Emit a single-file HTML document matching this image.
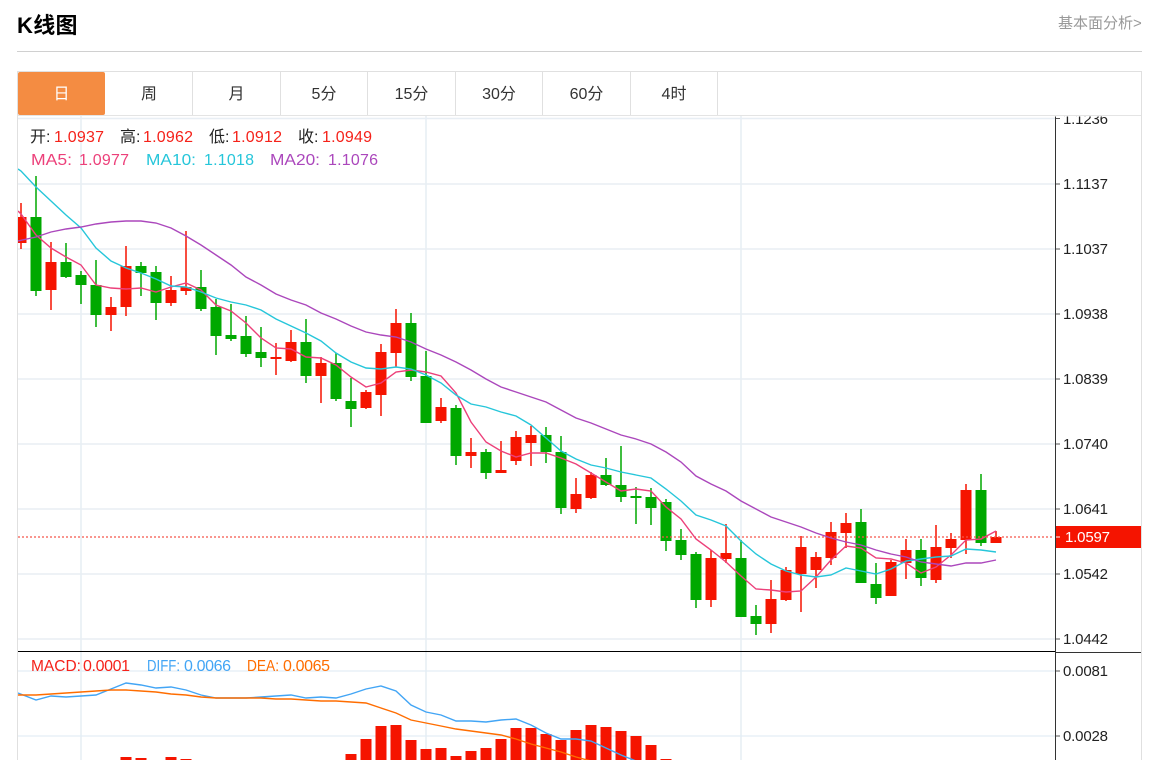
<!DOCTYPE html>
<html lang="zh">
<head>
<meta charset="utf-8">
<title>K线图</title>
<style>
html,body{margin:0;padding:0;background:#fff;width:1162px;height:760px;overflow:hidden}
body{position:relative;font-family:"Liberation Sans","Noto Sans CJK SC",sans-serif;color:#222}
.title{position:absolute;left:17px;top:10px;font-size:22px;line-height:32px;font-weight:bold;color:#000;letter-spacing:.3px}
.more{position:absolute;left:1058px;top:14px;font-size:15px;line-height:20px;color:#999;white-space:nowrap}
.hr{position:absolute;left:17px;top:51px;width:1125px;height:1px;background:#d0d0d0}
.box{position:absolute;left:17px;top:71px;width:1123px;height:700px;border:1px solid #e0e0e0}
.tab{position:absolute;top:72px;height:43px;line-height:45px;text-align:center;font-size:16px;color:#333;border-right:1px solid #e0e0e0;box-sizing:border-box}
.on{background:#f48c42;color:#fff;border-radius:2px;border-right:0}
.rule{position:absolute;left:18px;top:115px;width:1123px;height:1px;background:#e4e4e4}
svg{position:absolute;left:0;top:0}
svg text{font-family:"Liberation Sans","Noto Sans CJK SC",sans-serif}
</style>
</head>
<body>
<div class="title">K线图</div>
<div class="more">基本面分析&gt;</div>
<div class="hr"></div>
<div class="box"></div>
<div class="tab on" style="left:18px;width:87px">日</div>
<div class="tab" style="left:106px;width:87px">周</div>
<div class="tab" style="left:193px;width:88px">月</div>
<div class="tab" style="left:281px;width:87px">5分</div>
<div class="tab" style="left:368px;width:88px">15分</div>
<div class="tab" style="left:456px;width:87px">30分</div>
<div class="tab" style="left:543px;width:88px">60分</div>
<div class="tab" style="left:631px;width:87px">4时</div>
<div class="rule"></div>
<svg width="1162" height="760" viewBox="0 0 1162 760">
<defs>
<clipPath id="c"><rect x="18" y="116" width="1037" height="644"/></clipPath>
<clipPath id="t"><rect x="1056" y="116.5" width="85" height="20"/></clipPath>
</defs>
<g stroke="#e8eef4" stroke-width="1.6" fill="none">
<path d="M18 118.5H1055M18 184H1055M18 249H1055M18 314H1055M18 379H1055M18 444H1055M18 509H1055M18 574H1055M18 639H1055"/>
<path d="M81 116V651M426 116V651M741 116V651M81 652V760M426 652V760M741 652V760"/>
</g>
<path d="M18 671H1055M18 736H1055" stroke="#e3edf5" stroke-width="1.2" fill="none"/>
<g clip-path="url(#c)">
<path fill="none" stroke="#f51400" stroke-width="1.5" d="M21 203V249M51 242V310M111 297V331M126 246V316M171 276V306M186 231V295M276 343V375M291 330V362M321 357V403M366 390V409M381 344V416M396 309V367M441 398V423M471 438V468M501 441V473M516 431V465M531 426V466M576 478V513M591 472V499M711 550V607M726 524V563M771 580V633M786 567V601M801 536V612M816 552V588M831 522V565M846 513V548M891 560V596M906 539V579M936 525V583M951 533V558M966 484V554M996 531V543"/>
<path fill="#f51400" d="M15.5 217h11v26h-11zM45.5 262h11v28h-11zM105.5 307h11v8h-11zM120.5 266h11v41h-11zM165.5 290h11v13h-11zM180.5 287h11v4h-11zM270.5 357h11v2h-11zM285.5 342h11v19h-11zM315.5 363h11v13h-11zM360.5 392h11v16h-11zM375.5 352h11v43h-11zM390.5 323h11v30h-11zM435.5 407h11v14h-11zM465.5 452h11v4h-11zM495.5 470h11v3h-11zM510.5 437h11v24h-11zM525.5 435h11v8h-11zM570.5 494h11v15h-11zM585.5 475h11v23h-11zM705.5 558h11v42h-11zM720.5 553h11v6h-11zM765.5 599h11v25h-11zM780.5 570h11v30h-11zM795.5 547h11v27h-11zM810.5 557h11v13h-11zM825.5 532h11v26h-11zM840.5 523h11v10h-11zM885.5 562h11v34h-11zM900.5 550h11v13h-11zM930.5 547h11v33h-11zM945.5 539h11v9h-11zM960.5 490h11v50h-11zM990.5 537h11v6h-11z"/>
<path fill="none" stroke="#00a800" stroke-width="1.5" d="M36 176V296M66 243V278M81 271V304M96 260V327M141 262V296M156 266V320M201 270V311M216 299V355M231 304V341M246 316V357M261 327V367M306 319V383M336 353V401M351 378V427M411 313V381M426 351V423M456 405V465M486 449V479M546 427V463M561 436V514M606 458V486M621 446V502M636 487V524M651 488V525M666 499V551M681 529V560M696 552V608M741 540V617M756 605V635M861 509V583M876 563V604M921 539V586M981 474V546"/>
<path fill="#00a800" d="M30.5 217h11v74h-11zM60.5 262h11v15h-11zM75.5 275h11v10h-11zM90.5 285h11v30h-11zM135.5 266h11v7h-11zM150.5 272h11v31h-11zM195.5 287h11v22h-11zM210.5 307h11v29h-11zM225.5 335h11v4h-11zM240.5 336h11v18h-11zM255.5 352h11v6h-11zM300.5 342h11v34h-11zM330.5 363h11v36h-11zM345.5 401h11v8h-11zM405.5 323h11v54h-11zM420.5 376h11v47h-11zM450.5 408h11v48h-11zM480.5 452h11v21h-11zM540.5 435h11v17h-11zM555.5 452h11v56h-11zM600.5 475h11v10h-11zM615.5 485h11v12h-11zM630.5 496h11v2h-11zM645.5 497h11v11h-11zM660.5 502h11v39h-11zM675.5 540h11v15h-11zM690.5 554h11v46h-11zM735.5 558h11v59h-11zM750.5 616h11v8h-11zM855.5 522h11v61h-11zM870.5 584h11v14h-11zM915.5 550h11v28h-11zM975.5 490h11v53h-11z"/>
<path fill="none" stroke="#f5564a" stroke-width="1.2" stroke-dasharray="2 2" d="M18 537H1052"/>
<path fill="none" stroke="#ec407a" stroke-width="1.4" d="M18 211L21 214L36 235L51 248L66 257L81 265L96 285L111 288L126 289L141 288L156 292L171 287L186 283L201 290L216 305L231 311L246 323L261 338L276 348L291 349L306 357L321 358L336 365L351 377L366 387L381 383L396 372L411 370L426 372L441 376L456 393L471 422L486 442L501 451L516 457L531 453L546 453L561 458L576 464L591 473L606 482L621 491L636 489L651 491L666 507L681 519L696 539L711 550L726 562L741 576L756 589L771 590L786 592L801 591L816 577L831 560L846 546L861 548L876 558L891 559L906 563L921 573L936 567L951 555L966 540L981 539L996 531"/>
<path fill="none" stroke="#26c6da" stroke-width="1.4" d="M18 169L21 171L36 187L51 201L66 215L81 228L96 248L111 261L126 268L141 273L156 279L171 286L186 287L201 292L216 298L231 302L246 305L261 310L276 319L291 326L306 333L321 341L336 353L351 362L366 368L381 369L396 367L411 369L426 375L441 383L456 395L471 404L486 407L501 412L516 416L531 425L546 438L561 451L576 459L591 465L606 468L621 472L636 475L651 478L666 489L681 501L696 515L711 520L726 526L741 541L756 554L771 564L786 571L801 575L816 577L831 575L846 568L861 571L876 574L891 569L906 561L921 559L936 557L951 556L966 549L981 550L996 552"/>
<path fill="none" stroke="#ab47bc" stroke-width="1.4" d="M18 241L36 237L51 232L66 229L81 227L96 224L111 222L126 221L141 221L156 223L171 228L186 236L201 245L216 255L231 265L246 277L261 285L276 294L291 300L306 305L321 313L336 319L351 326L366 332L381 335L396 337L411 342L426 349L441 355L456 362L471 370L486 379L501 387L516 392L531 397L546 402L561 410L576 418L591 423L606 429L621 435L636 439L651 444L666 452L681 462L696 476L711 484L726 491L741 501L756 509L771 517L786 522L801 527L816 533L831 538L846 542L861 545L876 550L891 554L906 557L921 562L936 564L951 566L966 563L981 563L996 560"/>
<path fill="#f51400" d="M120.5 757h11v3h-11zM135.5 758h11v2h-11zM165.5 757h11v3h-11zM180.5 759h11v1h-11zM345.5 754h11v6h-11zM360.5 739h11v21h-11zM375.5 726h11v34h-11zM390.5 725h11v35h-11zM405.5 740h11v20h-11zM420.5 749h11v11h-11zM435.5 748h11v12h-11zM450.5 756h11v4h-11zM465.5 751h11v9h-11zM480.5 748h11v12h-11zM495.5 739h11v21h-11zM510.5 728h11v32h-11zM525.5 728h11v32h-11zM540.5 734h11v26h-11zM555.5 740h11v20h-11zM570.5 730h11v30h-11zM585.5 725h11v35h-11zM600.5 727h11v33h-11zM615.5 731h11v29h-11zM630.5 736h11v24h-11zM645.5 745h11v15h-11zM660.5 759h11v1h-11z"/>
<path fill="none" stroke="#42a5f5" stroke-width="1.4" d="M18 693L36 700L51 696L66 697L81 696L96 695L111 689L126 683L141 685L156 688L171 687L186 690L201 695L216 698L231 698L246 698L261 697L276 696L291 695L306 698L321 697L336 698L351 694L366 689L381 686L396 691L411 705L426 712L441 715L456 721L471 721L486 722L501 720L516 719L531 725L546 733L561 739L576 739L591 741L606 748L621 755L636 761"/>
<path fill="none" stroke="#ff6d00" stroke-width="1.4" d="M18 695L36 695L51 694L66 693L81 692L96 691L111 690L126 690L141 691L156 692L171 694L186 695L201 697L216 698L231 698L246 698L261 698L276 699L291 699L306 700L321 701L336 701L351 702L366 703L381 708L396 713L411 720L426 723L441 726L456 729L471 731L486 733L501 735L516 739L531 744L546 748L561 752L576 757L591 761"/>
</g>
<rect x="1056" y="526" width="85" height="22" fill="#f51400"/>
<path d="M1055.5 116.5V760" stroke="#333" stroke-width="1" fill="none"/>
<path d="M18 651.5H1055" stroke="#000" stroke-width="1" fill="none"/>
<path d="M1056 652.5H1141" stroke="#333" stroke-width="1" fill="none"/>
<path d="M1056 118.5H1060M1056 184H1060M1056 249H1060M1056 314H1060M1056 379H1060M1056 444H1060M1056 509H1060M1056 574H1060M1056 639H1060M1056 671H1060M1056 736H1060" stroke="#555" stroke-width="1" fill="none"/>
<path d="M1056 537H1060" stroke="#fff" stroke-width="1" fill="none"/>
<g font-size="15" fill="#222">
<text x="1063" y="124" textLength="45" clip-path="url(#t)">1.1236</text>
<text x="1063" y="189" textLength="45">1.1137</text>
<text x="1063" y="254" textLength="45">1.1037</text>
<text x="1063" y="319" textLength="45">1.0938</text>
<text x="1063" y="384" textLength="45">1.0839</text>
<text x="1063" y="449" textLength="45">1.0740</text>
<text x="1063" y="514" textLength="45">1.0641</text>
<text x="1063" y="579" textLength="45">1.0542</text>
<text x="1063" y="644" textLength="45">1.0442</text>
<text x="1063" y="676" textLength="45">0.0081</text>
<text x="1063" y="741" textLength="45">0.0028</text>
<text x="1065" y="542" fill="#fff" textLength="45">1.0597</text>
</g>
<g font-size="16">
<text x="30" y="142" fill="#222">开:</text><text x="54" y="142" fill="#f5221a" textLength="50">1.0937</text>
<text x="120" y="142" fill="#222">高:</text><text x="143" y="142" fill="#f5221a" textLength="50">1.0962</text>
<text x="209" y="142" fill="#222">低:</text><text x="232" y="142" fill="#f5221a" textLength="50">1.0912</text>
<text x="298" y="142" fill="#222">收:</text><text x="322" y="142" fill="#f5221a" textLength="50">1.0949</text>
<text x="31" y="165" fill="#ec407a" textLength="41" lengthAdjust="spacingAndGlyphs">MA5:</text><text x="79" y="165" fill="#ec407a" textLength="50">1.0977</text>
<text x="146" y="165" fill="#26c6da" textLength="50" lengthAdjust="spacingAndGlyphs">MA10:</text><text x="204" y="165" fill="#26c6da" textLength="50">1.1018</text>
<text x="270" y="165" fill="#ab47bc" textLength="50" lengthAdjust="spacingAndGlyphs">MA20:</text><text x="328" y="165" fill="#ab47bc" textLength="50">1.1076</text>
<text x="31" y="671" fill="#f5221a" textLength="50" lengthAdjust="spacingAndGlyphs">MACD:</text><text x="83" y="671" fill="#f5221a" textLength="47">0.0001</text>
<text x="147" y="671" fill="#42a5f5" textLength="33" lengthAdjust="spacingAndGlyphs">DIFF:</text><text x="184" y="671" fill="#42a5f5" textLength="47">0.0066</text>
<text x="247" y="671" fill="#ff6d00" textLength="32" lengthAdjust="spacingAndGlyphs">DEA:</text><text x="283" y="671" fill="#ff6d00" textLength="47">0.0065</text>
</g>
</svg>
</body>
</html>
